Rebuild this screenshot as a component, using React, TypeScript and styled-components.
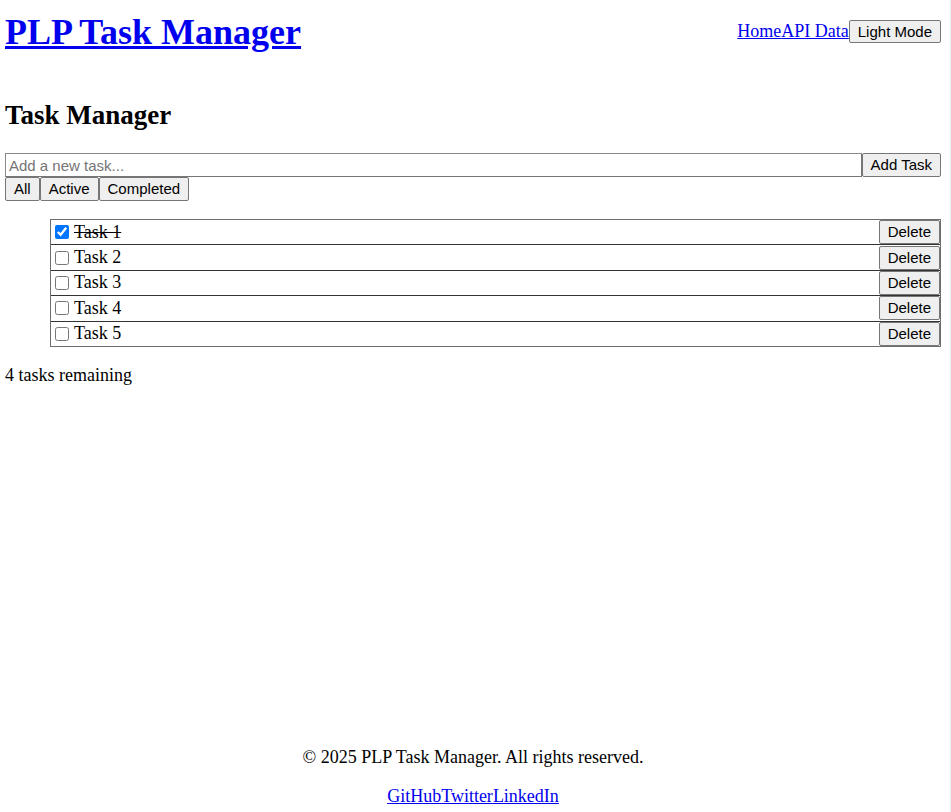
import React, { useState } from "react";
import styled, { createGlobalStyle } from "styled-components";

const GlobalStyle = createGlobalStyle`
  html, body {
    margin: 0;
    padding: 0;
    background: #ffffff;
  }
  body {
    font-family: "Liberation Serif", "Times New Roman", serif;
    font-size: 18px;
    color: #000000;
  }
`;

const Page = styled.div`
  box-sizing: border-box;
  min-height: 812px;
  display: flex;
  flex-direction: column;
  padding: 0 9px 0 5px;
  border-right: 1px solid #e8f4f4;
`;

const Header = styled.header`
  display: flex;
  justify-content: space-between;
  align-items: flex-start;
  padding-top: 11px;
`;

const Title = styled.h1`
  margin: 0;
  font-size: 36px;
  font-weight: bold;
  line-height: normal;
`;

const Link = styled.a`
  color: #0000ee;
  text-decoration: underline;
  cursor: pointer;
`;

const Nav = styled.nav`
  display: flex;
  align-items: center;
  margin-top: 9px;
  font-size: 18px;
`;

const Button = styled.button<{ $tall?: boolean }>`
  box-sizing: border-box;
  height: ${(p) => (p.$tall ? 24 : 23)}px;
  margin: 0;
  padding: 0 8px;
  font-family: "Liberation Sans", Arial, sans-serif;
  font-size: 15px;
  line-height: 18px;
  color: #000000;
  background: #efefef;
  border: 1px solid #767676;
  border-radius: 2px;
  cursor: pointer;
  white-space: nowrap;
`;

const Main = styled.main`
  display: flex;
  flex-direction: column;
`;

const Heading = styled.h2`
  margin: 47px 0 22px;
  font-size: 27px;
  font-weight: bold;
  line-height: normal;
`;

const AddRow = styled.form`
  display: flex;
  margin: 0;
`;

const TaskInput = styled.input`
  flex: 1;
  box-sizing: border-box;
  height: 24px;
  margin: 0;
  padding: 0 3px;
  font-family: "Liberation Sans", Arial, sans-serif;
  font-size: 15px;
  border: 1px solid #767676;
  border-top-color: #8a8a8a;
  border-left-color: #8a8a8a;
  outline: none;
  &::placeholder {
    color: #757575;
  }
`;

const FilterRow = styled.div`
  display: flex;
`;

const TaskList = styled.ul`
  list-style: none;
  margin: 18px 0 0;
  padding: 0 0 0 45px;
`;

const TaskItems = styled.div`
  border: 1px solid #6e6e6e;
`;

const TaskRow = styled.li`
  display: flex;
  align-items: center;
  justify-content: space-between;
  min-height: 24.4px;
  & + & {
    border-top: 1px solid #333333;
  }
`;

const TaskLabel = styled.label<{ $done: boolean }>`
  display: flex;
  align-items: center;
  font-size: 18px;
  line-height: normal;
  text-decoration: ${(p) => (p.$done ? "line-through" : "none")};
`;

const Check = styled.input`
  width: 14px;
  height: 14px;
  margin: 0 5px 0 4px;
  accent-color: #0075ff;
`;

const Remaining = styled.p`
  margin: 18px 0 0;
  font-size: 18px;
`;

const Footer = styled.footer`
  margin-top: auto;
  padding-bottom: 5px;
  text-align: center;
  font-size: 18px;
`;

const Copyright = styled.p`
  margin: 0 0 18px;
`;

const Socials = styled.p`
  margin: 0;
`;

type Task = { id: number; text: string; done: boolean };

export default function App() {
  const [tasks, setTasks] = useState<Task[]>([
    { id: 1, text: "Task 1", done: true },
    { id: 2, text: "Task 2", done: false },
    { id: 3, text: "Task 3", done: false },
    { id: 4, text: "Task 4", done: false },
    { id: 5, text: "Task 5", done: false },
  ]);
  const remaining = tasks.filter((t) => !t.done).length;

  const toggle = (id: number) =>
    setTasks((ts) => ts.map((t) => (t.id === id ? { ...t, done: !t.done } : t)));

  return (
    <>
      <GlobalStyle />
      <Page>
        <Header>
          <Title>
            <Link href="#">PLP Task Manager</Link>
          </Title>
          <Nav>
            <Link href="#">Home</Link>
            <Link href="#">API Data</Link>
            <Button type="button">Light Mode</Button>
          </Nav>
        </Header>
        <Main>
          <Heading>Task Manager</Heading>
          <AddRow onSubmit={(e) => e.preventDefault()}>
            <TaskInput placeholder="Add a new task..." />
            <Button $tall type="submit">Add Task</Button>
          </AddRow>
          <FilterRow>
            <Button $tall type="button">All</Button>
            <Button $tall type="button">Active</Button>
            <Button $tall type="button">Completed</Button>
          </FilterRow>
          <TaskList>
            <TaskItems>
              {tasks.map((t) => (
                <TaskRow key={t.id}>
                  <TaskLabel $done={t.done}>
                    <Check type="checkbox" checked={t.done} onChange={() => toggle(t.id)} />
                    {t.text}
                  </TaskLabel>
                  <Button $tall type="button">Delete</Button>
                </TaskRow>
              ))}
            </TaskItems>
          </TaskList>
          <Remaining>{remaining} tasks remaining</Remaining>
        </Main>
        <Footer>
          <Copyright>© 2025 PLP Task Manager. All rights reserved.</Copyright>
          <Socials>
            <Link href="#">GitHub</Link>
            <Link href="#">Twitter</Link>
            <Link href="#">LinkedIn</Link>
          </Socials>
        </Footer>
      </Page>
    </>
  );
}
